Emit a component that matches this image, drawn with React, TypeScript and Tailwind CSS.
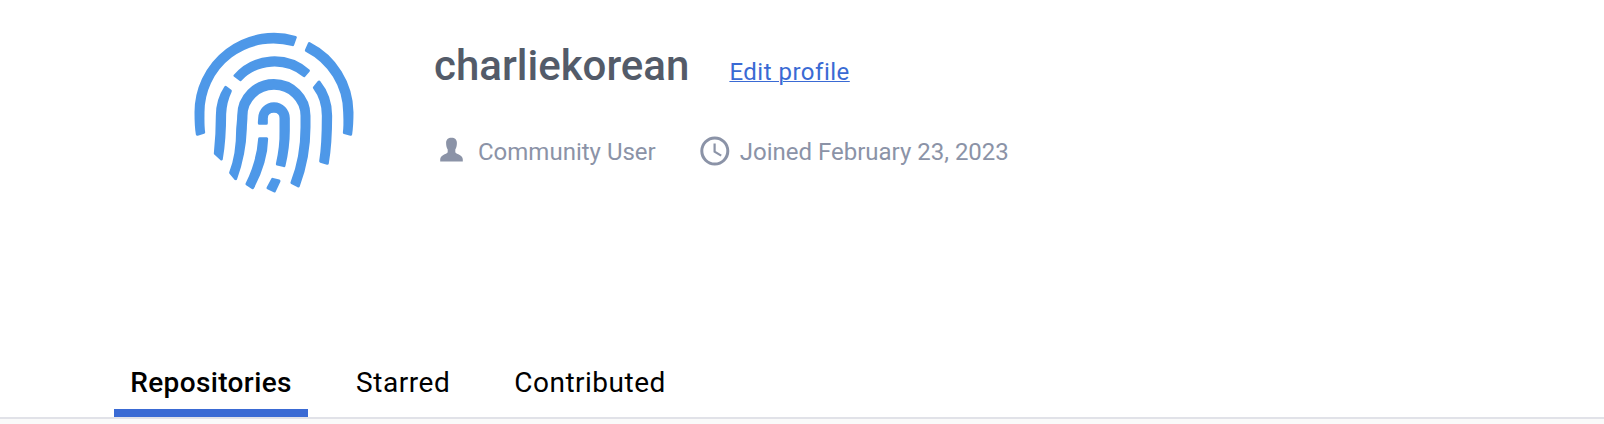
function Fingerprint() {
  return (
    <svg viewBox="0 0 540 540" className="size-[180px] shrink-0 fill-[#4e98e8] stroke-[#4e98e8]" strokeWidth="9" strokeLinejoin="round">
      <path d="M40 331C36 308 36 285 36 265A234 234 0 0 1 334 40L326 62A211 211 0 0 0 57 265C57 288 56 305 59 325Z" />
      <path d="M376 59A234 234 0 0 1 504 265C504 290 503 310 500 331L481 326C484 305 483 288 482 265A211 211 0 0 0 367 79Z" />
      <path d="M153 155A156 156 0 0 1 373 140L360 155A141 141 0 0 0 169 167Z" />
      <path d="M125 190C105 220 100 245 100 275C100 320 98 350 94 388L112 405C118 370 122 320 122 270C123 245 129 222 139 201Z" />
      <path d="M405 174C430 205 440 240 440 275C440 325 438 370 430 418L410 412C416 375 418 325 418 275C418 245 409 215 391 191Z" />
      <path d="M164 275A105.5 105.5 0 0 1 375 275V310C375 380 364 430 343 486L324 476C346 420 354 370 354 310V275A84 82 0 0 0 186 275C186 290 184 300 184 315C182 375 173 415 155 464L140 446C156 405 161 370 161 315C162 300 164 290 164 275Z" />
      <path d="M227 283A43 44 0 0 1 313 283V320C313 358 308 390 300 425L280 420C288 385 292 355 291 320V283C291 270 282 262 270 262C256 262 247 271 247 283V298H226C226 293 226.500 288 227 283Z" />
      <path d="M227 344H248C247 395 230 445 206 491L189 480C211 435 224 395 227 344Z" />
      <path d="M266 466L285 471L271 501L252 492Z" />
    </svg>
  );
}

function UserIcon() {
  return (
    <svg viewBox="0 0 24 25" className="-mt-[3px] h-[25px] w-6 shrink-0 fill-[#8b93a7]">
      <path d="M11.500.7C8.100.7 6.100 2.600 6.100 6C6.100 9 6.700 11 7.700 12.400V15.200C7.300 16.200 5 17 3.300 17.900C1.200 19 .2 20.500.2 22.500V24.500H22.800V22.500C22.800 20.500 21.800 19 19.700 17.900C18 17 15.700 16.200 15.300 15.200V12.400C16.300 11 16.900 9 16.900 6C16.900 2.600 14.900.7 11.500.7Z" />
    </svg>
  );
}

function ClockIcon() {
  return (
    <svg viewBox="0 0 30 30" className="size-[30px] shrink-0 fill-none stroke-[#8b93a7]">
      <circle cx="14.800" cy="15" r="13" strokeWidth="3" />
      <path d="M14.600 7.500V15.700L21.200 19.600" strokeWidth="2.200" />
    </svg>
  );
}

export default function App() {
  return (
    <div className="flex h-[424px] w-[1604px] flex-col overflow-hidden bg-white font-['Roboto',sans-serif]">
      <header className="flex h-[350px] items-start pt-6 pl-[184px]">
        <Fingerprint />
        <div className="flex flex-col pl-[70px]">
          <div className="flex items-baseline pt-4">
            <h1 className="text-[42px] leading-[52px] font-medium text-[#535b69]">charliekorean</h1>
            <a href="#" className="ml-10 text-[24px] leading-8 tracking-[0.5px] text-[#3a6ad4] underline decoration-1 underline-offset-1">Edit profile</a>
          </div>
          <div className="mt-[43px] flex h-8 items-center pl-[6px] text-[24px] leading-8 text-[#8b93a7]">
            <UserIcon />
            <span className="ml-[14px] pt-px">Community User</span>
            <span className="ml-[44px] flex items-center gap-[10px]">
              <ClockIcon />
              <span className="pt-px">Joined February 23, 2023</span>
            </span>
          </div>
        </div>
      </header>
      <nav className="flex h-[67px] shrink-0 pl-[114px] text-[28px] leading-[66px] text-black">
        <a href="#" className="flex h-[67px] w-[194px] justify-center border-b-8 border-[#3a6ad4] font-medium tracking-[0.38px]">Repositories</a>
        <a href="#" className="ml-12 tracking-[0.55px]">Starred</a>
        <a href="#" className="ml-16 tracking-[0.5px]">Contributed</a>
      </nav>
      <div className="h-[7px] border-t-2 border-[#e1e2e8] bg-[#fafafa]" />
    </div>
  );
}
